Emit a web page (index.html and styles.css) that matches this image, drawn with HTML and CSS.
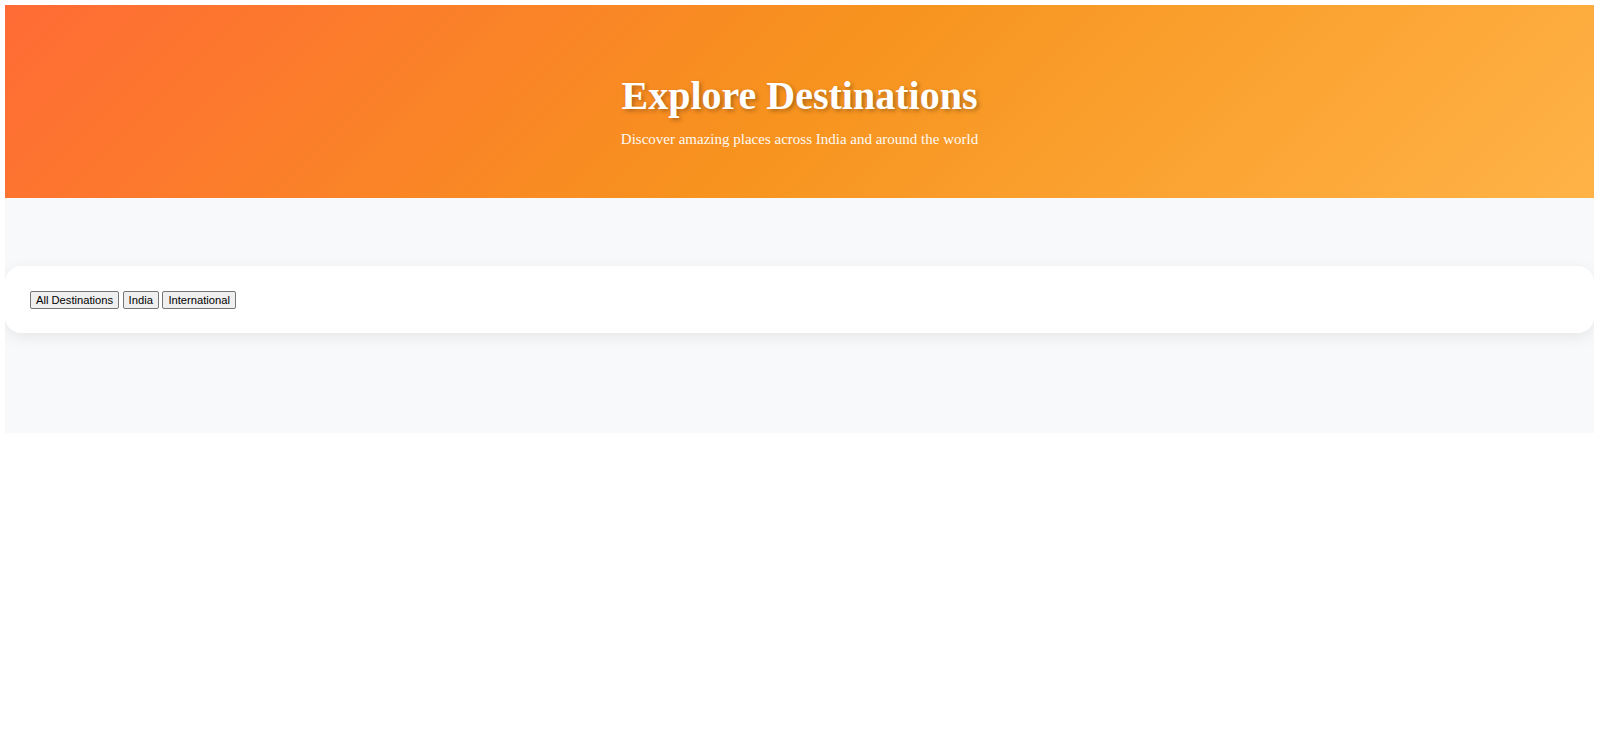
FILE: index.html
```html
<!DOCTYPE html>
<html lang="en">
<head>
<meta charset="utf-8">
<title>Explore Destinations</title>
<link rel="stylesheet" href="styles.css">
</head>
<body>
<header class="hero">
  <h1 class="hero-title">Explore Destinations</h1>
  <p class="hero-sub">Discover amazing places across India and around the world</p>
</header>
<section class="content">
  <div class="filter-card">
    <button class="filter-btn">All Destinations</button>
    <button class="filter-btn">India</button>
    <button class="filter-btn">International</button>
  </div>
</section>
</body>
</html>
```
FILE: styles.css
```css
html, body {
  background: #ffffff;
}
body {
  margin: 5px 6px 0 5px;
  font-family: "Liberation Serif", "Times New Roman", serif;
}
.hero {
  background: linear-gradient(135deg, #ff6b35 0%, #f7931e 50%, #ffb347 100%);
  color: #ffffff;
  text-align: center;
  padding: 69px 20px 50px;
}
.hero-title {
  margin: 0 0 13px;
  font-size: 40px;
  line-height: 44px;
  font-weight: bold;
  text-shadow: 2px 2px 4px rgba(0, 0, 0, 0.3);
}
.hero-sub {
  margin: 0;
  font-size: 15px;
  line-height: 17px;
  opacity: 0.95;
}
.content {
  background: #f8f9fa;
  padding: 68px 0 100px;
}
.filter-card {
  background: #ffffff;
  border-radius: 16px;
  box-shadow: 0 4px 16px rgba(0, 0, 0, 0.08);
  padding: 25px 25px 24px;
  display: flex;
  gap: 3.5px;
}
.filter-btn {
  font-family: "Liberation Sans", Arial, sans-serif;
  font-size: 11.2px;
  color: #000000;
  background: #efefef;
  border: 1px solid #767676;
  border-radius: 2px;
  padding: 1px 5px;
  height: 18px;
  line-height: 14px;
  margin: 0;
}
```
